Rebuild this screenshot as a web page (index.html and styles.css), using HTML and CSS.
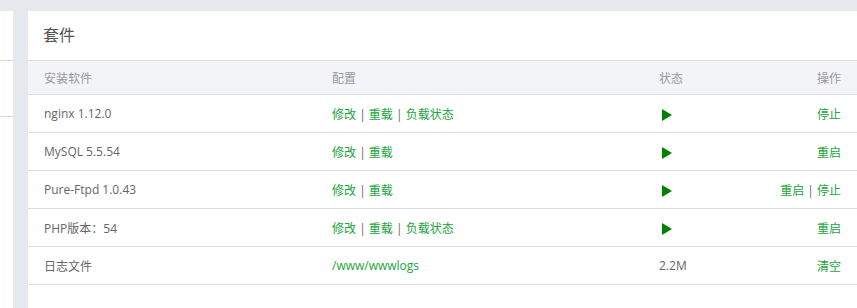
FILE: index.html
```html
<!DOCTYPE html>
<html lang="zh-CN">
<head>
  <meta charset="UTF-8">
  <title>套件</title>
  <link rel="stylesheet" href="styles.css">
</head>
<body>
  <div class="page">
    <aside class="side">
      <div class="side-row"></div>
      <div class="side-row"></div>
    </aside>

    <div class="card">
      <div class="card-title">套件</div>
      <table class="soft">
        <colgroup>
          <col class="c1">
          <col class="c2">
          <col class="c3">
          <col>
        </colgroup>
        <thead>
          <tr>
            <th>安装软件</th>
            <th>配置</th>
            <th>状态</th>
            <th class="right">操作</th>
          </tr>
        </thead>
        <tbody>
          <tr>
            <td>nginx 1.12.0</td>
            <td><a href="#">修改</a> | <a href="#">重载</a> | <a href="#">负载状态</a></td>
            <td><svg class="play" width="10" height="12" viewBox="0 0 10 12"><path d="M0 0L10 6L0 12Z"/></svg></td>
            <td class="right"><a href="#">停止</a></td>
          </tr>
          <tr>
            <td>MySQL 5.5.54</td>
            <td><a href="#">修改</a> | <a href="#">重载</a></td>
            <td><svg class="play" width="10" height="12" viewBox="0 0 10 12"><path d="M0 0L10 6L0 12Z"/></svg></td>
            <td class="right"><a href="#">重启</a></td>
          </tr>
          <tr>
            <td>Pure-Ftpd 1.0.43</td>
            <td><a href="#">修改</a> | <a href="#">重载</a></td>
            <td><svg class="play" width="10" height="12" viewBox="0 0 10 12"><path d="M0 0L10 6L0 12Z"/></svg></td>
            <td class="right"><a href="#">重启</a> | <a href="#">停止</a></td>
          </tr>
          <tr>
            <td>PHP版本：54</td>
            <td><a href="#">修改</a> | <a href="#">重载</a> | <a href="#">负载状态</a></td>
            <td><svg class="play" width="10" height="12" viewBox="0 0 10 12"><path d="M0 0L10 6L0 12Z"/></svg></td>
            <td class="right"><a href="#">重启</a></td>
          </tr>
          <tr>
            <td>日志文件</td>
            <td><a href="#">/www/wwwlogs</a></td>
            <td>2.2M</td>
            <td class="right"><a href="#">清空</a></td>
          </tr>
        </tbody>
      </table>
    </div>
  </div>
</body>
</html>
```

FILE: styles.css
```css
body {
  margin: 0;
  padding: 0;
  background-color: #e5e8ed;
  font-family: "Open Sans", "Noto Sans CJK SC", sans-serif;
  font-size: 12px;
  color: #666;
}

.page {
  display: flex;
  padding-top: 11px;
  height: 297px;
  overflow: hidden;
}

.side {
  width: 13px;
  margin-right: 15px;
  background: #fff;
  flex-shrink: 0;
}

.side-row {
  height: 49px;
  border-bottom: 1px solid #ddd;
}

.side-row + .side-row {
  height: 55px;
}

.card {
  flex: 1;
  background: #fff;
}

.card-title {
  height: 49px;
  line-height: 49px;
  padding-left: 15px;
  font-size: 16px;
  color: #555;
  border-bottom: 1px solid #ddd;
}

.soft {
  width: 100%;
  border-collapse: collapse;
  table-layout: fixed;
}

.soft col.c1 { width: 288px; }
.soft col.c2 { width: 327px; }
.soft col.c3 { width: 120px; }

.soft th {
  height: 33px;
  padding: 0 16px;
  background: #f3f4f7;
  color: #999;
  font-weight: normal;
  text-align: left;
  border-bottom: 1px solid #ddd;
}

.soft td {
  height: 37px;
  padding: 0 16px;
  border-bottom: 1px solid #ddd;
  white-space: nowrap;
}

.soft .right {
  text-align: right;
}

.soft a {
  color: #20a53a;
  text-decoration: none;
}

.play {
  fill: #008000;
  vertical-align: -3px;
  margin-left: 3px;
}
```
